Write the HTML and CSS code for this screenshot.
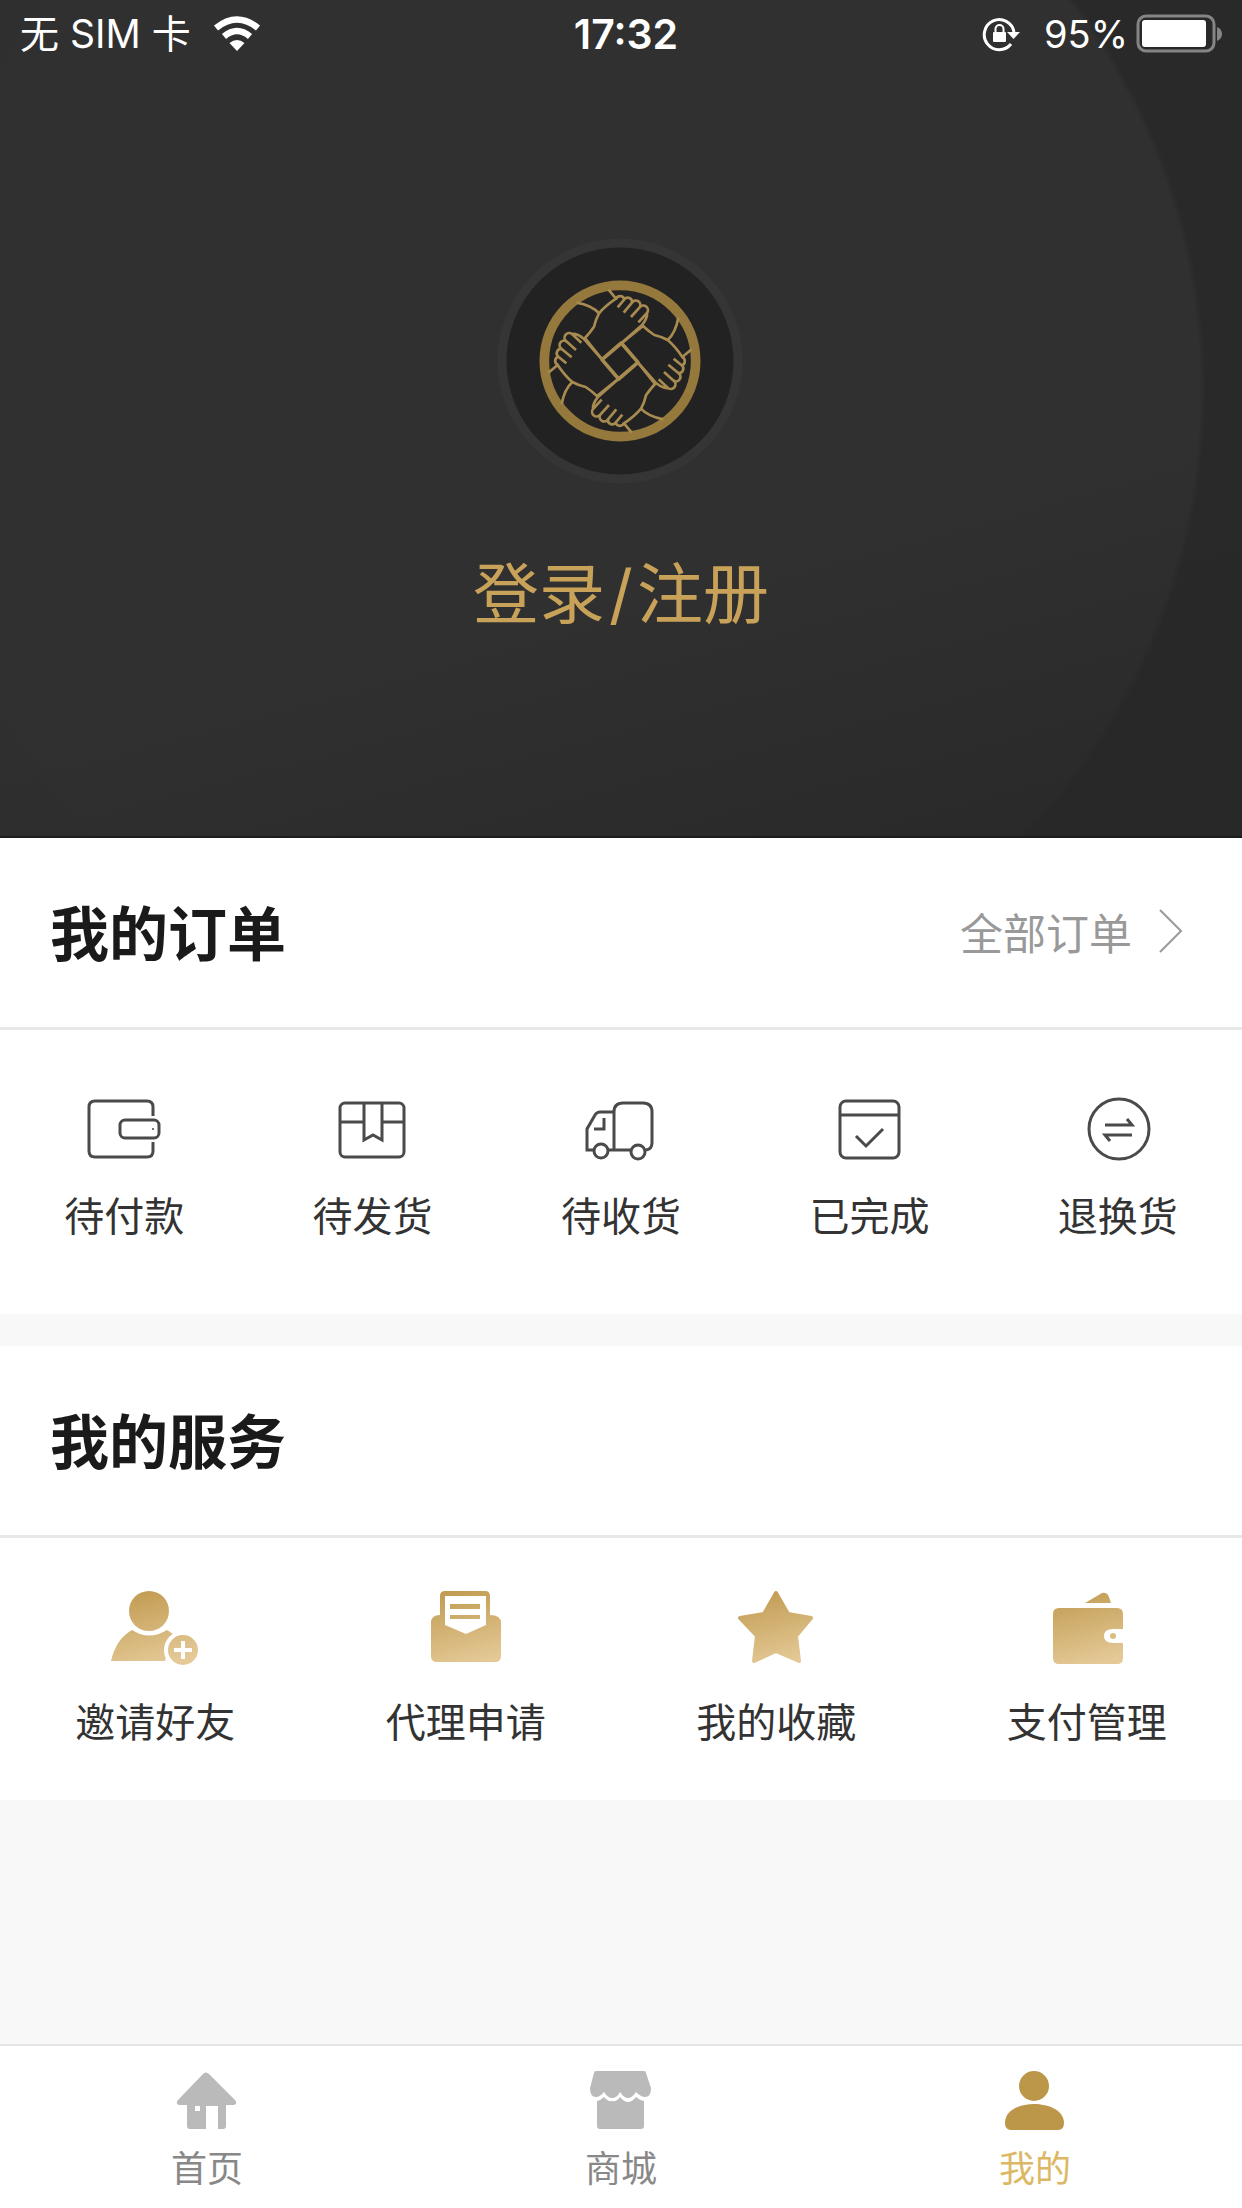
FILE: index.html
```html
<!DOCTYPE html>
<html lang="zh-CN">
<head>
    <meta charset="UTF-8">
    <meta name="viewport" content="width=device-width, initial-scale=1.0">
    <title>我的</title>
    <link rel="stylesheet" href="styles.css">
</head>
<body>
    <!-- Header -->
    <header class="hero">
        <div class="status-bar">
            <div class="status-left">
                <span>无 SIM 卡</span>
                <svg class="wifi" viewBox="0 0 48 36">
                    <path d="M24 35L16.500 27Q24 21 31.500 27Z" fill="#fff"/>
                    <path d="M11 20.500Q24 9.500 37 20.500" fill="none" stroke="#fff" stroke-width="6.500"/>
                    <path d="M3 12Q24 -5 45 12" fill="none" stroke="#fff" stroke-width="6.500"/>
                </svg>
            </div>
            <time class="status-time">17:32</time>
            <div class="status-right">
                <svg class="lock" viewBox="0 0 38 36">
                    <path d="M29 28A15 15 0 1 1 32 16" fill="none" stroke="#fff" stroke-width="3"/>
                    <path d="M25 16H38L31.500 23Z" fill="#fff"/>
                    <rect x="11" y="16" width="13" height="10" rx="1" fill="#fff"/>
                    <path d="M13.500 17V13a4 4 0 0 1 8 0V17" fill="none" stroke="#fff" stroke-width="2"/>
                </svg>
                <span>95%</span>
                <svg class="battery" viewBox="0 0 88 40">
                    <rect x="2" y="2" width="76" height="35" rx="8" fill="none" stroke="#858585" stroke-width="3"/>
                    <rect x="6" y="6" width="64" height="27" rx="3" fill="#fff"/>
                    <path d="M81 13Q86 15 86 20T81 27Z" fill="#858585"/>
                </svg>
            </div>
        </div>

        <a href="#" class="login">
            <svg class="avatar" viewBox="0 0 252 252">
                <defs>
                    <g id="hand">
                        <path d="M290 250Q335 258 357 282"/>
                        <path d="M385 210L408 238Q375 260 357 282Q347 300 342 322Q330 340 315 356L368 422"/>
                        <path d="M408 240A13 13 0 0 1 433 240L413 264"/>
                        <path d="M433 240A13 13 0 0 1 456 250L431 280"/>
                        <path d="M456 250A13 13 0 0 1 479 264L453 293"/>
                        <path d="M479 264A13 13 0 0 1 501 281L475 309M501 281Q503 296 487 316L428 368"/>
                    </g>
                </defs>
                <circle cx="125" cy="126" r="118" fill="#222" stroke="#353535" stroke-width="9"/>
                <g transform="translate(125 126) scale(0.3333) translate(-420 -425)" fill="none" stroke="#a88b50" stroke-width="8" stroke-linejoin="round">
                    <circle cx="420" cy="425" r="227" stroke="#95783b" stroke-width="29"/>
                    <use href="#hand"/>
                    <use href="#hand" transform="rotate(90 420 425)"/>
                    <use href="#hand" transform="rotate(180 420 425)"/>
                    <use href="#hand" transform="rotate(270 420 425)"/>
                    <path d="M424 371L474 429L416 479L366 421Z" stroke-width="11"/>
                </g>
            </svg>
            <span class="login-text">登录<span class="slash">/</span>注册</span>
        </a>
    </header>

    <!-- Orders -->
    <section class="card">
        <div class="card-head">
            <h2>我的订单</h2>
            <a href="#" class="more">全部订单
                <svg viewBox="0 0 24 44"><path d="M1 1L22 22L1 43" fill="none" stroke="#999" stroke-width="2"/></svg>
            </a>
        </div>
        <nav class="orders">
            <a href="#">
                <svg viewBox="0 0 80 80">
                    <path d="M69 26V17Q69 11 63 11H11Q5 11 5 17V61Q5 67 11 67H63Q69 67 69 61V52"/>
                    <rect x="36" y="30" width="39" height="18" rx="5"/>
                    <circle cx="69" cy="39" r="1" stroke="none" fill="#444"/>
                </svg>
                <span>待付款</span>
            </a>
            <a href="#">
                <svg viewBox="0 0 80 80">
                    <rect x="7" y="13" width="64" height="54" rx="5"/>
                    <path d="M7 32H31M49 32H71M31 13V50L40 45L49 50V13"/>
                </svg>
                <span>待发货</span>
            </a>
            <a href="#">
                <svg viewBox="0 0 80 80">
                    <path d="M12 60H6V39L14 25Q16 22 19 22H33M27 60H49M65 60Q71 59 71 53V22Q71 13 62 13H42Q33 13 33 22V60"/>
                    <path d="M23 28V39H13"/>
                    <circle cx="20" cy="61" r="7"/>
                    <circle cx="57" cy="62" r="7"/>
                </svg>
                <span>待收货</span>
            </a>
            <a href="#">
                <svg viewBox="0 0 80 80">
                    <rect x="11" y="11" width="59" height="57" rx="6"/>
                    <path d="M11 25H70M27 46L37 56L54 39"/>
                </svg>
                <span>已完成</span>
            </a>
            <a href="#">
                <svg viewBox="0 0 80 80">
                    <circle cx="41" cy="39" r="30"/>
                    <path d="M27 35H54L49 29M54 45H27L32 51"/>
                </svg>
                <span>退换货</span>
            </a>
        </nav>
    </section>

    <!-- Services -->
    <section class="card">
        <div class="card-head">
            <h2>我的服务</h2>
        </div>
        <nav class="services">
            <a href="#">
                <svg viewBox="0 0 100 80">
                    <defs>
                        <linearGradient id="gold" gradientUnits="userSpaceOnUse" x1="35" y1="0" x2="55" y2="78">
                            <stop offset="0" stop-color="#c09a50"/>
                            <stop offset="1" stop-color="#e5ca98"/>
                        </linearGradient>
                    </defs>
                    <circle cx="44" cy="23" r="20"/>
                    <path d="M6 73Q11 51 27 42Q44 53 62 42L68 46L60 73Z"/>
                    <circle cx="78" cy="62" r="19" fill="#fff"/>
                    <circle cx="78" cy="62" r="15"/>
                    <path d="M69 62H87M78 53V71" stroke="#fff" stroke-width="4"/>
                </svg>
                <span>邀请好友</span>
            </a>
            <a href="#">
                <svg viewBox="0 0 100 80">
                    <path d="M24 27V8Q24 3 29 3H69Q74 3 74 8V27Q85 27 85 35V68Q85 74 79 74H21Q15 74 15 68V35Q15 27 24 27Z"/>
                    <path d="M29 8H70V37L50 46L29 37Z" fill="#fff"/>
                    <path d="M34 16H64V21H34ZM34 27H64V31H34Z"/>
                </svg>
                <span>代理申请</span>
            </a>
            <a href="#">
                <svg viewBox="0 0 100 80">
                    <path d="M50 5L62 26L85 30L70 48L73 73L50 63L28 73L31 48L14 30L38 26Z" stroke="url(#gold)" stroke-width="4" stroke-linejoin="round"/>
                </svg>
                <span>我的收藏</span>
            </a>
            <a href="#">
                <svg viewBox="0 0 100 80">
                    <path d="M48 15L65 5Q70 4 72 9L74 15Z"/>
                    <path d="M22 20H80Q86 20 86 26V41H76Q67 41 67 48T76 55H86V70Q86 76 80 76H22Q16 76 16 70V26Q16 20 22 20Z"/>
                    <circle cx="76" cy="48" r="3"/>
                </svg>
                <span>支付管理</span>
            </a>
        </nav>
    </section>

    <!-- Tab bar -->
    <nav class="tabbar">
        <a href="#">
            <svg viewBox="0 0 70 72">
                <path d="M31 10Q34 7 37 10L63 36Q66 40 62 41H54V62Q54 65 51 65H46V42H34V65H18Q15 65 15 62V41H7Q3 40 6 36ZM23 42V47H28V42Z" fill-rule="evenodd"/>
            </svg>
            <span>首页</span>
        </a>
        <a href="#">
            <svg viewBox="0 0 70 72">
                <path d="M10 7H58Q60 7 60 9L65 24Q65 33 59 33Q55 33 50 28Q46 34 42 34Q38 34 34 28Q31 34 26 34Q22 34 18 28Q14 33 10 33Q4 33 4 24L8 9Q8 7 10 7Z"/>
                <path d="M11 37Q15 36 18 33Q22 38 26 37Q31 38 34 33Q38 38 42 38Q46 38 50 33Q53 36 58 37V62Q58 65 55 65H14Q11 65 11 62Z"/>
            </svg>
            <span>商城</span>
        </a>
        <a href="#" class="active">
            <svg viewBox="0 0 70 72">
                <circle cx="34" cy="22" r="15"/>
                <path d="M5 59C5 46 20 40 34 40S64 46 64 59Q64 66 58 66H11Q5 66 5 59Z"/>
            </svg>
            <span>我的</span>
        </a>
    </nav>
</body>
</html>
```
FILE: styles.css
```css
* {
    margin: 0;
    padding: 0;
    box-sizing: border-box;
}

body {
    min-height: 100vh;
    display: flex;
    flex-direction: column;
    background: #f8f8f8;
    font-family: 'Noto Sans CJK SC', sans-serif;
    color: #333;
}

a {
    color: inherit;
    text-decoration: none;
}

svg {
    display: block;
    flex-shrink: 0;
}

/* Header */
.hero {
    height: 838px;
    background:
        linear-gradient(165deg, transparent 65%, rgba(39, 39, 39, 0.7) 95%),
        radial-gradient(circle 647px at 45% 390px, #303030 99%, transparent 100%),
        linear-gradient(90deg, #2f2f2f 60%, #292929 85%);
    border-bottom: 2px solid #1d1d1d;
}

.status-bar {
    height: 68px;
    display: grid;
    grid-template-columns: 1fr auto 1fr;
    align-items: center;
    padding: 0 18px 0 20px;
    font-family: Inter, 'Noto Sans CJK SC', sans-serif;
    font-size: 39px;
    line-height: 68px;
    color: #fff;
}

.status-left,
.status-right {
    display: flex;
    align-items: center;
}

.status-left {
    gap: 22px;
}

.status-right {
    justify-content: flex-end;
    gap: 8px;
    font-size: 38px;
}

.status-time {
    padding-left: 8px;
    font-size: 41px;
    font-weight: 600;
}

.wifi {
    width: 48px;
    height: 36px;
}

.lock {
    width: 38px;
    height: 36px;
    margin-right: 16px;
}

.battery {
    width: 88px;
    height: 40px;
}

.login {
    display: flex;
    flex-direction: column;
    align-items: center;
    gap: 54px;
    padding-top: 167px;
}

.avatar {
    width: 252px;
    height: 252px;
}

.login-text {
    font-size: 66px;
    line-height: 96px;
    color: #c9a259;
}

.slash {
    margin: 0 4px;
    font-family: Inter, sans-serif;
}

/* Cards */
.card {
    background: #fff;
    margin-bottom: 32px;
}

.card-head {
    height: 192px;
    display: flex;
    align-items: center;
    justify-content: space-between;
    padding: 0 59px 4px 50px;
    border-bottom: 3px solid #e8e8e8;
}

.card-head h2 {
    font-size: 59px;
    font-weight: 700;
    color: #1a1a1a;
}

.more {
    display: flex;
    align-items: center;
    gap: 27px;
    font-size: 43px;
    color: #999;
}

.more svg {
    width: 24px;
    height: 44px;
}

.orders,
.services {
    display: grid;
    font-size: 40px;
    line-height: 60px;
}

.orders {
    grid-template-columns: repeat(5, 1fr);
    padding: 60px 0 70px;
}

.services {
    grid-template-columns: repeat(4, 1fr);
    padding: 50px 0 50px;
}

.orders a,
.services a {
    display: flex;
    flex-direction: column;
    align-items: center;
}

.orders a {
    gap: 14px;
}

.services a {
    gap: 22px;
}

.orders svg {
    width: 80px;
    height: 80px;
    fill: none;
    stroke: #4a4a4a;
    stroke-width: 3;
}

.services svg {
    width: 100px;
    height: 80px;
    fill: url(#gold);
}

/* Tab bar */
.tabbar {
    margin-top: auto;
    height: 164px;
    display: grid;
    grid-template-columns: repeat(3, 1fr);
    background: #fff;
    border-top: 2px solid #e5e5e5;
    font-size: 36px;
    line-height: 52px;
    color: #888;
}

.tabbar a {
    display: flex;
    flex-direction: column;
    align-items: center;
    gap: 4px;
    padding-top: 18px;
}

.tabbar svg {
    width: 70px;
    height: 72px;
    fill: #bababa;
}

.tabbar .active {
    color: #dcb865;
}

.tabbar .active svg {
    fill: #bd9749;
}
```
